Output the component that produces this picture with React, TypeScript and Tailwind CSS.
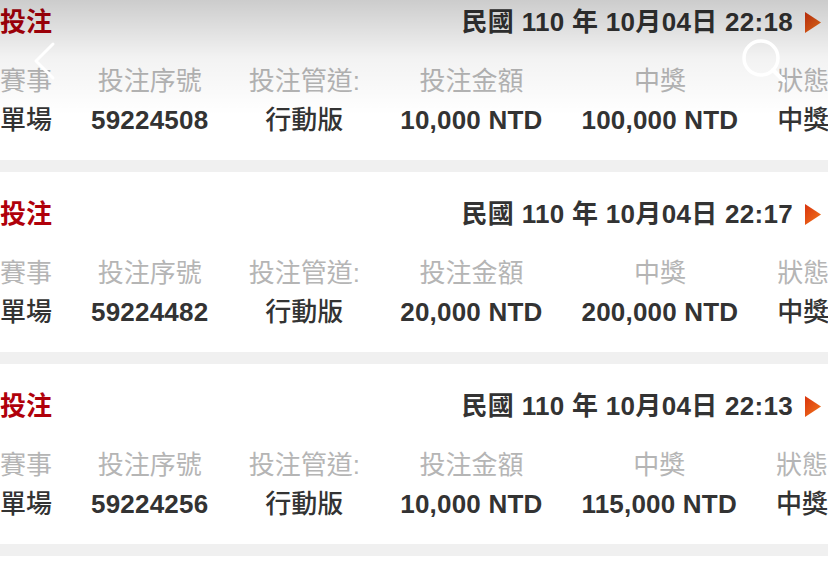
import React from 'react';

type Bet = { time: string; serial: string; amount: string; prize: string };

const bets: Bet[] = [
  { time: '22:18', serial: '59224508', amount: '10,000 NTD', prize: '100,000 NTD' },
  { time: '22:17', serial: '59224482', amount: '20,000 NTD', prize: '200,000 NTD' },
  { time: '22:13', serial: '59224256', amount: '10,000 NTD', prize: '115,000 NTD' },
];

const labels = ['賽事', '投注序號', '投注管道:', '投注金額', '中獎', '狀態'];

const PlayArrow = () => (
  <svg width="18" height="23" viewBox="0 0 18 23" className="shrink-0">
    <defs>
      <linearGradient id="arrowGrad" x1="0" y1="0" x2="1" y2="1">
        <stop offset="0%" stopColor="#d9340e" />
        <stop offset="100%" stopColor="#f2781c" />
      </linearGradient>
    </defs>
    <polygon points="1,1 17,11.5 1,22" fill="url(#arrowGrad)" />
  </svg>
);

const BetCard = ({ bet }: { bet: Bet }) => {
  const values = [
    { v: '單場', cjk: true },
    { v: bet.serial, cjk: false },
    { v: '行動版', cjk: true },
    { v: bet.amount, cjk: false },
    { v: bet.prize, cjk: false },
    { v: '中獎', cjk: true },
  ];
  return (
    <div className="bg-white pt-[27px] pb-[25px]">
      {/* header */}
      <div className="flex items-center justify-between h-[30px] pr-[6px]">
        <span className="text-[26px] leading-[30px] font-bold text-[#b0000a]">投注</span>
        <div className="flex items-center gap-[11px]">
          <span className="text-[26px] leading-[30px] font-bold tracking-[0.3px] text-[#333]">
            民國 110 年 10月04日 {bet.time}
          </span>
          <PlayArrow />
        </div>
      </div>

      {/* detail table */}
      <div className="mt-[29px] grid grid-cols-[max-content_max-content_114px_max-content_max-content_max-content] gap-x-[39px] gap-y-[9px] justify-items-center whitespace-nowrap">
        {labels.map((l) => (
          <span key={l} className="text-[26px] leading-[30px] text-[#b5b5b5]">
            {l}
          </span>
        ))}
        {values.map((c, i) => (
          <span
            key={i}
            className={
              c.cjk
                ? 'text-[26px] leading-[30px] font-medium text-[#333]'
                : 'text-[26px] leading-[30px] font-bold tracking-[0.2px] text-[#333]'
            }
          >
            {c.v}
          </span>
        ))}
      </div>
    </div>
  );
};

export default function App() {
  return (
    <div
      className="relative w-[828px] h-[564px] overflow-hidden bg-[#f0f0f0]"
      style={{ fontFamily: '"Liberation Sans", "Noto Sans CJK TC", sans-serif' }}
    >
      <div className="-mt-5 flex flex-col gap-[12px]">
        {bets.map((b) => (
          <BetCard key={b.serial} bet={b} />
        ))}
        <div className="bg-white h-[30px]" />
      </div>

      {/* player overlay shading */}
      <div className="absolute inset-x-0 top-0 h-[115px] bg-gradient-to-b from-black/20 via-black/5 to-transparent pointer-events-none" />

      {/* back chevron */}
      <svg className="absolute left-[30px] top-[40px]" width="28" height="42" viewBox="0 0 28 42">
        <polyline
          points="23,4 6,21 23,38"
          fill="none"
          stroke="white"
          strokeWidth="3"
          strokeLinecap="round"
          strokeLinejoin="round"
        />
      </svg>

      {/* search icon */}
      <svg className="absolute left-[740px] top-[38px]" width="50" height="48" viewBox="0 0 50 48">
        <circle cx="21" cy="20" r="17" fill="none" stroke="white" strokeWidth="3.5" />
        <line x1="33" y1="32" x2="44" y2="43" stroke="white" strokeWidth="4" strokeLinecap="round" />
      </svg>
    </div>
  );
}
